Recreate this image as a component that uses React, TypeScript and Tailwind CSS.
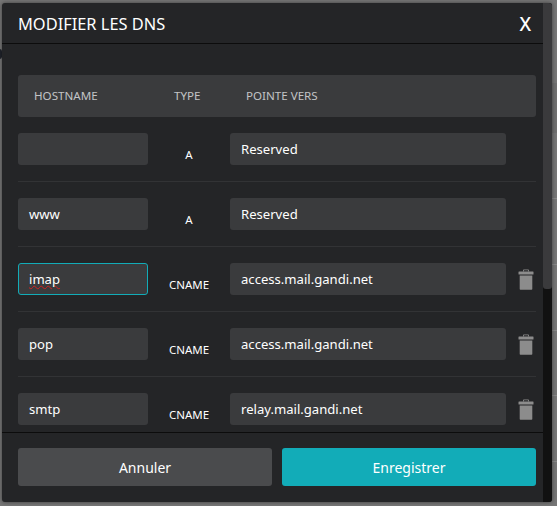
import React from "react";

const rows = [
  { host: "", type: "A", target: "Reserved", del: false, focus: false },
  { host: "www", type: "A", target: "Reserved", del: false, focus: false },
  { host: "imap", type: "CNAME", target: "access.mail.gandi.net", del: true, focus: true },
  { host: "pop", type: "CNAME", target: "access.mail.gandi.net", del: true, focus: false },
  { host: "smtp", type: "CNAME", target: "relay.mail.gandi.net", del: true, focus: false },
];

const backdropLines = [198, 264, 330, 395, 461];

function Trash() {
  return (
    <svg width="16" height="21" viewBox="0 0 16 21" fill="#8c8c8c">
      <path d="M5 2.5V1.2Q5 .5 5.8 .5h4.4q.8 0 .8.7v1.3h-.9V1.3H5.9v1.2z" />
      <rect x="0.5" y="2.5" width="15" height="3" rx="0.5" />
      <path d="M1.7 6.5h12.6V20q0 .7-.7.7H2.4q-.7 0-.7-.7z" />
    </svg>
  );
}

export default function App() {
  return (
    <div className="relative h-[506px] w-[557px] overflow-hidden bg-[#777777] pl-[2px] pr-[5px] pt-[3px] pb-[4px] font-['Noto_Sans',sans-serif]">
      <div className="absolute left-[-3px] top-[49px] h-[10px] w-[5px] rounded-full bg-[#20242c]" />
      <div className="absolute right-0 top-[83px] h-[50px] w-[5px] bg-[#707070]" />
      {backdropLines.map((y) => (
        <div key={y} className="absolute right-0 h-px w-[5px] bg-[#8a8a8a]" style={{ top: y }} />
      ))}
      <div className="relative flex h-full overflow-hidden rounded-[3px] bg-[#242527] text-white shadow-[0_0_4px_rgba(0,0,0,0.5)]">
        <div className="flex min-w-0 flex-1 flex-col">
          <div className="flex h-[41px] shrink-0 items-center justify-between border-b border-[#0c0c0c] pl-[16px] pr-[12px] pt-[2px]">
            <span className="text-[16.4px] leading-none">MODIFIER LES DNS</span>
            <span className="text-[19px] font-medium leading-none">X</span>
          </div>
          <div className="min-h-0 flex-1 overflow-hidden pl-[16px] pr-[7px] pt-[31px]">
            <div className="flex h-[42px] items-center rounded-[3px] bg-[#3a3b3d] text-[11.6px] text-[#c2c4c6]">
              <span className="ml-[16px] w-[140px]">HOSTNAME</span>
              <span className="w-[72px]">TYPE</span>
              <span>POINTE VERS</span>
            </div>
            <div className="mt-[16px]">
              {rows.map((r) => (
                <div key={r.host} className="mb-[16px] flex gap-[16px] border-b border-[#323335] pb-[16px]">
                  <div
                    className={`flex h-[32px] w-[130px] shrink-0 items-center rounded-[3px] bg-[#3a3b3d] pt-[1px] text-[13.1px] ${
                      r.focus ? "border border-[#12acb8] px-[10px]" : "px-[11px]"
                    }`}
                  >
                    <span className={r.focus ? "underline decoration-wavy decoration-[#d02020] decoration-1" : ""}>{r.host}</span>
                  </div>
                  <div className="flex h-[32px] w-[50px] shrink-0 items-end justify-center text-[11.5px] font-[450] leading-none">
                    <span className="translate-y-[-5px]">{r.type}</span>
                  </div>
                  <div className="flex h-[32px] w-[276px] shrink-0 items-center rounded-[3px] bg-[#3a3b3d] px-[11px] pt-[1px] text-[13.1px]">
                    {r.target}
                  </div>
                  {r.del && (
                    <div className="-ml-[4px] flex h-[32px] w-[16px] shrink-0 items-center justify-center">
                      <Trash />
                    </div>
                  )}
                </div>
              ))}
            </div>
          </div>
          <div className="flex h-[70px] shrink-0 gap-[10px] border-t border-[#0c0c0c] pl-[16px] pr-[7px] pt-[15px]">
            <button className="h-[38px] w-[254px] rounded-[3px] bg-[#4a4b4d] text-[14px] text-white">Annuler</button>
            <button className="h-[38px] w-[254px] rounded-[3px] bg-[#12acb8] text-[14px] text-white">Enregistrer</button>
          </div>
        </div>
        <div className="h-full w-[9px] shrink-0 bg-[#111111]">
          <div className="h-[286px] rounded-b-[3px] bg-[#3a3a3c]" />
        </div>
      </div>
    </div>
  );
}
